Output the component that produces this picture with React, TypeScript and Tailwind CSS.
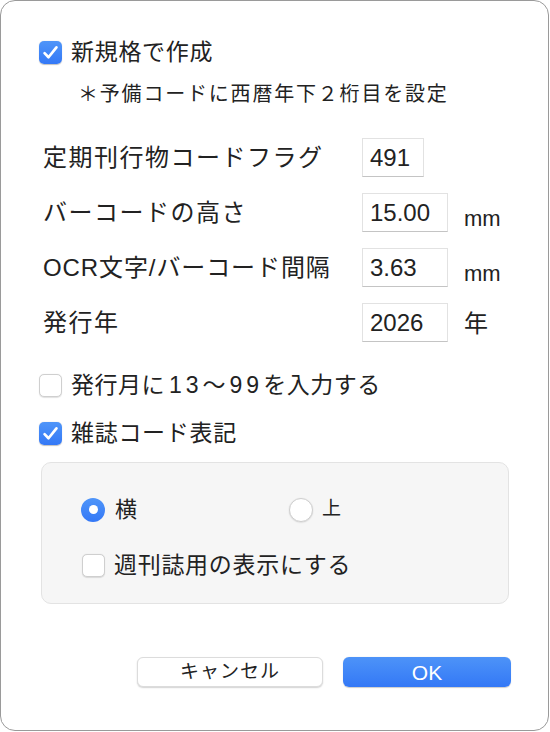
import React from "react";

const font = { fontFamily: '"Liberation Sans", "Noto Sans CJK JP", sans-serif' };

const CheckMark = () => (
  <svg viewBox="0 0 24 24" className="w-[19px] h-[19px]" fill="none">
    <path d="M4.5 12.8l5 5.2L19.5 5.5" stroke="white" strokeWidth="3.4" strokeLinecap="round" strokeLinejoin="round" />
  </svg>
);

const Checkbox = ({ checked }: { checked: boolean }) =>
  checked ? (
    <div className="w-[23px] h-[23px] shrink-0 rounded-[5px] bg-gradient-to-b from-[#4f95f9] to-[#3478f6] flex items-center justify-center shadow-[0_0.5px_1px_rgba(0,0,0,0.25)]">
      <CheckMark />
    </div>
  ) : (
    <div className="w-[23px] h-[23px] shrink-0 rounded-[5px] bg-white border border-[#cfcfcf] shadow-[0_0.5px_1px_rgba(0,0,0,0.12)]" />
  );

const Radio = ({ on }: { on: boolean }) =>
  on ? (
    <div className="w-[24px] h-[24px] shrink-0 rounded-full bg-gradient-to-b from-[#4f95f9] to-[#3478f6] flex items-center justify-center">
      <div className="w-[9px] h-[9px] rounded-full bg-white" />
    </div>
  ) : (
    <div className="w-[24px] h-[24px] shrink-0 rounded-full bg-white border border-[#cfcfcf] shadow-[0_0.5px_1.5px_rgba(0,0,0,0.15)]" />
  );

const Field = ({ value, w }: { value: string; w: string }) => (
  <div
    className={`${w} h-[39px] shrink-0 bg-white border border-[#e2e2e2] border-b-[#c4c4c4] flex items-center pl-[7px] text-[24px] text-[#222]`}
  >
    {value}
  </div>
);

const rows = [
  { label: "定期刊行物コードフラグ", value: "491", w: "w-[62px]", unit: "", cls: "", lab: "tracking-[1.5px]" },
  { label: "バーコードの高さ", value: "15.00", w: "w-[86px]", unit: "mm", cls: "mt-[12px] text-[22px]", lab: "tracking-[1.5px]" },
  { label: "OCR文字/バーコード間隔", value: "3.63", w: "w-[86px]", unit: "mm", cls: "mt-[12px] text-[22px]", lab: "tracking-[0.9px]" },
  { label: "発行年", value: "2026", w: "w-[86px]", unit: "年", cls: "mt-[2px] text-[24px]", lab: "tracking-[1.5px]" },
];

export default function App() {
  return (
    <div className="w-[550px] h-[732px] bg-white" style={font}>
      <div className="w-[549px] h-[731px] border border-[#9a9a9a] rounded-[15px] bg-white pl-[38px] pt-[40px] text-[#222]">
        {/* 新規格 */}
        <div className="flex items-center h-[23px] gap-[9px]">
          <Checkbox checked />
          <span className="text-[23px] tracking-[0.7px]">新規格で作成</span>
        </div>
        <div className="h-[30px] mt-[15px] flex items-center pl-[39px] text-[20px] tracking-[1.8px]">
          ＊予備コードに西暦年下２桁目を設定
        </div>

        {/* 数値欄 */}
        <div className="mt-[29px] flex flex-col gap-[16px]">
          {rows.map((r) => (
            <div key={r.label} className="flex items-center h-[39px]">
              <div className={`w-[323px] pl-[4px] text-[24px] whitespace-nowrap ${r.lab}`}>{r.label}</div>
              <Field value={r.value} w={r.w} />
              {r.unit && <span className={`ml-[16px] leading-none ${r.cls}`}>{r.unit}</span>}
            </div>
          ))}
        </div>

        <div className="mt-[31px] flex items-center h-[24px] gap-[9px]">
          <Checkbox checked={false} />
          <span className="text-[23px] tracking-[0.5px]">
            発行月に<span className="tracking-[4px] ml-[4px]">13〜99</span>を入力する
          </span>
        </div>
        <div className="mt-[24px] flex items-center h-[24px] gap-[9px]">
          <Checkbox checked />
          <span className="text-[23px] tracking-[0.7px]">雑誌コード表記</span>
        </div>

        {/* グループ */}
        <div className="mt-[17px] ml-[2px] w-[468px] h-[142px] rounded-[10px] bg-[#f6f6f6] border border-[#e3e3e3] pl-[39px] pt-[30px]">
          <div className="grid grid-cols-[208px_auto] h-[24px]">
            <div className="flex items-center gap-[10px]">
              <Radio on />
              <span className="text-[22px]">横</span>
            </div>
            <div className="flex items-center gap-[9px]">
              <Radio on={false} />
              <span className="text-[19px]">上</span>
            </div>
          </div>
          <div className="mt-[36px] ml-[1px] flex items-center h-[24px] gap-[9px]">
            <Checkbox checked={false} />
            <span className="text-[23px] tracking-[0.7px]">週刊誌用の表示にする</span>
          </div>
        </div>

        {/* ボタン */}
        <div className="mt-[53px] ml-[98px] flex gap-[20px]">
          <button className="w-[186px] h-[30px] rounded-[6px] bg-white border border-[#dcdcdc] shadow-[0_1px_1.5px_rgba(0,0,0,0.18)] text-[19px] text-[#222] tracking-[1px]">
            キャンセル
          </button>
          <button className="w-[168px] h-[30px] rounded-[6px] bg-gradient-to-b from-[#4d93f8] to-[#3478f6] text-white text-[21px] shadow-[0_0.5px_1px_rgba(0,0,0,0.2)]">
            OK
          </button>
        </div>
      </div>
    </div>
  );
}
